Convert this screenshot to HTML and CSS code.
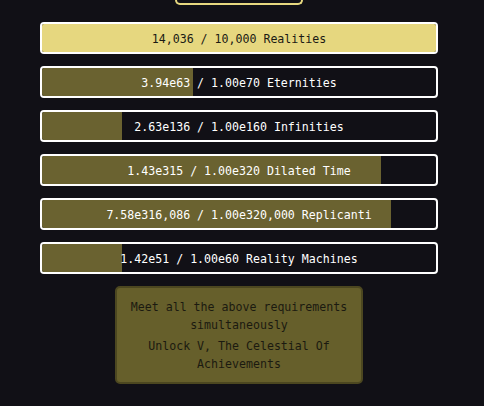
FILE: index.html
```html
<!DOCTYPE html>
<html>
<head>
<meta charset="utf-8">
<link rel="stylesheet" href="styles.css">
</head>
<body>
<div class="page">
  <div class="top-btn"></div>
  <div class="bars">
    <div class="bar full"><div class="fill" style="width:100%"></div><span class="label">14,036 / 10,000 Realities</span></div>
    <div class="bar"><div class="fill" style="width:38.2%"></div><span class="label">3.94e63 / 1.00e70 Eternities</span></div>
    <div class="bar"><div class="fill" style="width:20.2%"></div><span class="label">2.63e136 / 1.00e160 Infinities</span></div>
    <div class="bar"><div class="fill" style="width:86%"></div><span class="label">1.43e315 / 1.00e320 Dilated Time</span></div>
    <div class="bar"><div class="fill" style="width:88.5%"></div><span class="label">7.58e316,086 / 1.00e320,000 Replicanti</span></div>
    <div class="bar"><div class="fill" style="width:20.2%"></div><span class="label">1.42e51 / 1.00e60 Reality Machines</span></div>
  </div>
  <div class="unlock">
    <p>Meet all the above requirements simultaneously</p>
    <p>Unlock V, The Celestial Of Achievements</p>
  </div>
</div>
</body>
</html>
```

FILE: styles.css
```css
html, body {
  margin: 0;
  padding: 0;
  background: #111016;
  height: 100%;
}
.page {
  width: 478px;
  display: flex;
  flex-direction: column;
  align-items: center;
  font-family: "DejaVu Sans Mono", "Liberation Mono", monospace;
  font-size: 11.6px;
}
.top-btn {
  width: 124px;
  height: 3px;
  border: 2px solid #e6d77f;
  border-top: none;
  border-radius: 0 0 5px 5px;
}
.bars {
  margin-top: 17px;
  display: flex;
  flex-direction: column;
  gap: 12px;
}
.bar {
  position: relative;
  width: 394px;
  height: 28px;
  border: 2px solid #ffffff;
  border-radius: 4px;
  background: #111016;
  overflow: hidden;
  display: flex;
  align-items: center;
  justify-content: center;
}
.fill {
  position: absolute;
  left: 0;
  top: 0;
  bottom: 0;
  background: #6a6230;
}
.bar.full .fill {
  background: #e6d77f;
}
.label {
  position: relative;
  color: #ffffff;
  padding-top: 1px;
}
.bar.full .label {
  color: #1a1a14;
}
.unlock {
  margin-top: 12px;
  width: 244px;
  height: 94px;
  box-sizing: content-box;
  border: 2px solid #4c4720;
  border-radius: 5px;
  background: #665f2b;
  color: #1b1a10;
  display: flex;
  flex-direction: column;
  justify-content: center;
  align-items: center;
  text-align: center;
  gap: 3px;
}
.unlock p {
  margin: 0;
  line-height: 18px;
  padding: 0 8px;
}
```
